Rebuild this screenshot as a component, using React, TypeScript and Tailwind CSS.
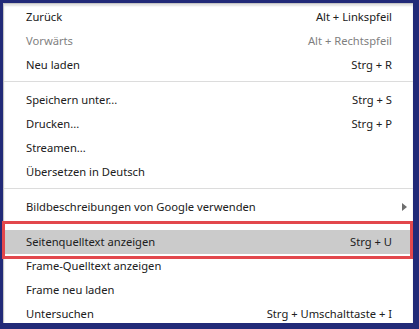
type Item = { label: string; shortcut?: string; disabled?: boolean; submenu?: boolean; active?: boolean }

const groups: Item[][] = [
  [
    { label: 'Zurück', shortcut: 'Alt + Linkspfeil' },
    { label: 'Vorwärts', shortcut: 'Alt + Rechtspfeil', disabled: true },
    { label: 'Neu laden', shortcut: 'Strg + R' },
  ],
  [
    { label: 'Speichern unter...', shortcut: 'Strg + S' },
    { label: 'Drucken...', shortcut: 'Strg + P' },
    { label: 'Streamen...' },
    { label: 'Übersetzen in Deutsch' },
  ],
  [{ label: 'Bildbeschreibungen von Google verwenden', submenu: true }],
  [
    { label: 'Seitenquelltext anzeigen', shortcut: 'Strg + U', active: true },
    { label: 'Frame-Quelltext anzeigen' },
    { label: 'Frame neu laden' },
    { label: 'Untersuchen', shortcut: 'Strg + Umschalttaste + I' },
  ],
]

function Row({ item }: { item: Item }) {
  return (
    <div
      className={`flex h-[24px] items-center justify-between pl-[22px] pr-[21px] ${
        item.active ? 'bg-[#cbcbcb]' : ''
      } ${item.disabled ? 'text-[#7f7f7f]' : 'text-[#202020]'}`}
    >
      <span>{item.label}</span>
      {item.shortcut && <span>{item.shortcut}</span>}
      {item.submenu && (
        <svg width="5" height="8" viewBox="0 0 5 8" className="mr-[-15px]">
          <path d="M0 0 L5 4 L0 8 Z" fill="#6e6e6e" />
        </svg>
      )}
    </div>
  )
}

export default function App() {
  return (
    <div
      className="relative h-[329px] w-[419px] overflow-hidden bg-[#222a78] pb-[6px] pl-[3px] pr-[6px] pt-[3px] text-[11.2px]"
      style={{ fontFamily: '"Noto Sans", "Open Sans", sans-serif' }}
    >
      <div className="h-full overflow-hidden border-l border-t border-[#c4c4c4] bg-white pt-[1px] shadow-[inset_0_2px_2px_rgba(0,0,0,0.12)]">
        {groups.map((group, gi) => (
          <div key={gi}>
            {gi > 0 && (
              <div className="flex h-[11px] items-start pt-[4px]">
                <div className="h-px w-full bg-[#dcdcdc]" />
              </div>
            )}
            {group.map((item) => (
              <Row key={item.label} item={item} />
            ))}
          </div>
        ))}
      </div>

      {/* red highlight box */}
      <div className="absolute left-[2px] top-[221px] h-[38px] w-[411px] border-[3px] border-[#e2474c]" />
    </div>
  )
}
